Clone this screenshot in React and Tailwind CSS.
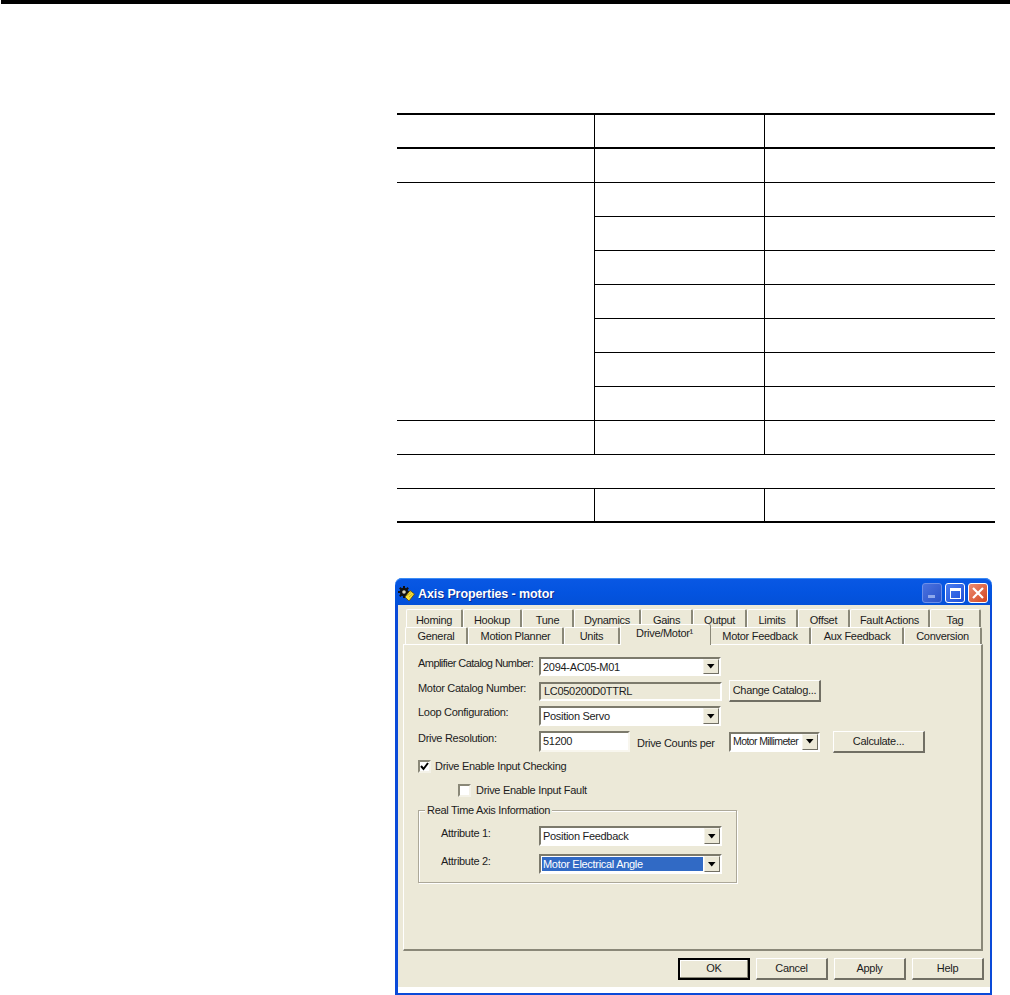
const F = "font-['Liberation_Sans',sans-serif] text-[11px] leading-none tracking-[-0.3px] whitespace-nowrap text-[#1c1c1c]";

function TableRow({ border = "border-b", cols = true }) {
  return (
    <div className={`flex h-[34px] ${border} border-black`}>
      <div className="w-[197px] shrink-0" />
      {cols && <div className="w-[170px] shrink-0 border-l border-black" />}
      {cols && <div className="flex-1 border-l border-black" />}
    </div>
  );
}

function SubRows() {
  return (
    <div className="flex">
      <div className="w-[197px] shrink-0 border-b border-black" />
      <div className="flex-1 flex flex-col">
        {[0, 1, 2, 3, 4, 5, 6].map((i) => (
          <div key={i} className="flex h-[34px] border-b border-black">
            <div className="w-[170px] shrink-0 border-l border-black" />
            <div className="flex-1 border-l border-black" />
          </div>
        ))}
      </div>
    </div>
  );
}

function Tab({ w, children, active = false, upper = false }) {
  return (
    <div
      style={{ width: w }}
      className={`shrink-0 flex items-center justify-center rounded-t-[2px] border-t border-l border-white border-r-2 border-r-[#8a8878] bg-[#ece9d8] ${F} ${
        active
          ? "h-[21px] -mt-[3px] z-10 -mb-px pb-[3px] border-r-[#ece9d8] shadow-[1px_0_0_#8a8878]"
          : upper
          ? "h-full pt-[3px]"
          : "h-full pt-[1px]"
      }`}
    >
      {children}
    </div>
  );
}

function Arrow() {
  return (
    <div className="w-[16px] h-full shrink-0 flex items-center justify-center bg-[#ece9d8] border border-t-[#f5f3ea] border-l-[#f5f3ea] border-r-[#716f64] border-b-[#716f64]">
      <svg width="8" height="5" viewBox="0 0 8 5"><path d="M0 0h7.5L3.75 4.5z" fill="#000" /></svg>
    </div>
  );
}

function Select({ children, w = "w-[182px]", h = "h-[20px]", selected = false, inner = "" }) {
  return (
    <div className={`${w} ${h} shrink-0 flex bg-white border-2 border-t-[#7c7a6c] border-l-[#7c7a6c] border-r-[#ffffff] border-b-[#ffffff] pr-0`}>
      <div className={`flex-1 min-w-0 overflow-hidden flex items-center pl-px m-px ${F} ${selected ? "bg-[#316ac5] !text-white" : ""} ${inner}`}>
        {children}
      </div>
      <Arrow />
    </div>
  );
}

function Btn({ w, h = "h-[22px]", children, def = false, inner = "pb-px" }) {
  return (
    <div
      style={{ width: w }}
      className={`${h} shrink-0 flex items-center justify-center bg-[#ece9d8] ${inner} ${F} ${
        def
          ? "border-2 border-black shadow-[inset_-1px_-1px_0_#8a8878,inset_1px_1px_0_#fff]"
          : "border border-t-white border-l-white border-r-[#716f64] border-b-[#716f64] border-b-2 border-r-2"
      }`}
    >
      {children}
    </div>
  );
}

function Check({ checked = false }) {
  return (
    <div className="w-[13px] h-[13px] shrink-0 flex items-center justify-center bg-white border-2 border-t-[#8a8878] border-l-[#8a8878] border-r-[#f4f2e8] border-b-[#f4f2e8]">
      {checked && (
        <svg width="9" height="9" viewBox="0 0 9 9"><path d="M1 4l2.5 3L8 1" fill="none" stroke="#000" strokeWidth="2" /></svg>
      )}
    </div>
  );
}

function Logo() {
  return (
    <svg width="17" height="16" viewBox="0 0 17 16" className="shrink-0">
      <path d="M6 0v12M0 6h12M1.8 1.8l8.4 8.4M10.2 1.8l-8.4 8.4" stroke="#111" strokeWidth="2" />
      <circle cx="6" cy="6" r="4.2" fill="#111" />
      <circle cx="6" cy="6" r="1.8" fill="#d8d4c0" />
      <path d="M7 11l5-6.5 4.5 3.5-5.5 7z" fill="#f7e13a" stroke="#5a4a08" strokeWidth=".8" />
      <path d="M9.5 9.5l3.5-3M11 11l3.5-3" stroke="#b89a10" strokeWidth=".7" />
    </svg>
  );
}

function CaptionBtn({ kind }) {
  if (kind === "close")
    return (
      <div className="w-[20px] h-[20px] rounded-[3px] border border-white bg-gradient-to-br from-[#ec8b70] to-[#d2431a] flex items-center justify-center">
        <svg width="12" height="12" viewBox="0 0 12 12"><path d="M1 1l10 10M11 1L1 11" stroke="#fff" strokeWidth="2.2" /></svg>
      </div>
    );
  if (kind === "max")
    return (
      <div className="w-[20px] h-[20px] rounded-[3px] border border-white bg-gradient-to-br from-[#4a7cf0] to-[#1f4fd8] flex items-center justify-center">
        <div className="w-[11px] h-[11px] border border-white border-t-[3px]" />
      </div>
    );
  return (
    <div className="w-[20px] h-[20px] rounded-[3px] border border-[#6d8fe8] bg-gradient-to-br from-[#4a72e0] to-[#2a52c8] flex items-end pl-[5px] pb-[4px]">
      <div className="w-[7px] h-[3px] bg-[#8fa8ec]" />
    </div>
  );
}

export default function App() {
  return (
    <div className="w-[1010px] h-[995px] bg-white overflow-hidden">
      <div className="h-[4px] ml-px bg-black" />

      <div className="ml-[397px] mt-[109px] w-[598px]">
        <div className="border-t-2 border-black">
          <TableRow border="border-b-2" />
          <TableRow />
          <SubRows />
          <TableRow />
          <TableRow cols={false} />
          <TableRow border="border-b-2" />
        </div>
      </div>

      <div className="ml-[395px] mt-[55px] w-[597px] h-[417px] flex flex-col">
        <div className="h-[27px] shrink-0 pt-[4px] rounded-t-[7px] bg-gradient-to-b from-[#0a58e4] via-[#0454e0] to-[#0350d8] shadow-[inset_0_1px_0_#3b8cf5] flex items-center pl-[3px] pr-[4px]">
          <Logo />
          <span className="ml-[3px] pt-px font-['Liberation_Sans',sans-serif] text-[12.5px] tracking-[-0.1px] font-bold text-white leading-none whitespace-nowrap [text-shadow:1px_1px_0_#0a2a90]">
            Axis Properties - motor
          </span>
          <div className="ml-auto flex gap-[3px] -mt-[1px]">
            <CaptionBtn kind="min" />
            <CaptionBtn kind="max" />
            <CaptionBtn kind="close" />
          </div>
        </div>

        <div className="flex-1 flex flex-col border-l-[3px] border-r-[2px] border-b-[2px] border-[#0a4ad8] bg-white">
          <div className="flex-1 flex flex-col bg-[#ece9d8]">
            <div className="h-[4px] shrink-0" />
            <div className="flex h-[18px] pl-[8px]">
              {[["Homing", 57], ["Hookup", 59], ["Tune", 52], ["Dynamics", 67], ["Gains", 52], ["Output", 54], ["Limits", 51], ["Offset", 52], ["Fault Actions", 80], ["Tag", 51]].map(([t, w]) => (
                <Tab key={t} w={w} upper>{t}</Tab>
              ))}
            </div>
            <div className="flex h-[17px] pl-[7px] relative">
              {[["General", 63], ["Motion Planner", 96], ["Units", 56]].map(([t, w]) => (
                <Tab key={t} w={w}>{t}</Tab>
              ))}
              <Tab w={90} active>Drive/Motor¹</Tab>
              {[["Motor Feedback", 101], ["Aux Feedback", 93], ["Conversion", 78]].map(([t, w]) => (
                <Tab key={t} w={w}>{t}</Tab>
              ))}
            </div>

            <div className="mx-[5px] mr-[7px] h-[307px] shrink-0 border border-t-white border-l-white border-r-2 border-b-2 border-r-[#8a8878] border-b-[#8a8878] pl-[14px] flex flex-col">
              <div className="mt-[12px] flex items-center h-[19px]">
                <span className={`w-[121px] shrink-0 pb-[6px] ${F} !tracking-[-0.55px]`}>Amplifier Catalog Number:</span>
                <Select h="h-[19px]" w="w-[182px]" inner="pt-[2px]">2094-AC05-M01</Select>
              </div>
              <div className="mt-[4px] flex items-center h-[22px]">
                <span className={`w-[121px] shrink-0 pb-[5px] ${F}`}>Motor Catalog Number:</span>
                <div className={`w-[183px] h-[19px] shrink-0 flex items-center pl-[3px] bg-[#ece9d8] border-2 border-t-[#7c7a6c] border-l-[#7c7a6c] border-r-white border-b-white ${F}`}>LC050200D0TTRL</div>
                <div className="ml-[7px]"><Btn w={92}>Change Catalog...</Btn></div>
              </div>
              <div className="mt-[4px] flex items-center h-[20px]">
                <span className={`w-[121px] shrink-0 pb-[8px] ${F}`}>Loop Configuration:</span>
                <Select>Position Servo</Select>
              </div>
              <div className="mt-[5px] flex items-center h-[21px]">
                <span className={`w-[121px] shrink-0 pb-[6px] ${F}`}>Drive Resolution:</span>
                <div className={`w-[91px] h-[21px] shrink-0 flex items-center pl-[2px] bg-white border-2 border-t-[#7c7a6c] border-l-[#7c7a6c] border-r-[#f8f6ee] border-b-[#f8f6ee] ${F}`}>51200</div>
                <span className={`ml-[7px] w-[92px] shrink-0 pt-[3px] ${F}`}>Drive Counts per</span>
                <Select w="w-[91px]" h="h-[20px]" inner="!text-[10.5px] !tracking-[-0.6px]">Motor Millimeter</Select>
                <div className="ml-[13px]"><Btn w={92} inner="pt-px">Calculate...</Btn></div>
              </div>
              <div className="mt-[8px] flex items-center h-[13px] gap-[4px]">
                <Check checked />
                <span className={F}>Drive Enable Input Checking</span>
              </div>
              <div className="mt-[11px] ml-[40px] flex items-center h-[13px] gap-[5px]">
                <Check />
                <span className={F}>Drive Enable Input Fault</span>
              </div>
              <div className="relative mt-[13px] w-[319px] h-[73px] shrink-0 border border-[#aca899] shadow-[inset_1px_1px_0_#fff,1px_1px_0_#fff] pl-[22px] flex flex-col">
                <span className={`absolute -top-[6px] left-[6px] px-[2px] bg-[#ece9d8] ${F}`}>Real Time Axis Information</span>
                <div className="mt-[15px] flex items-center h-[20px]">
                  <span className={`w-[98px] shrink-0 pb-[6px] ${F}`}>Attribute 1:</span>
                  <Select w="w-[183px]">Position Feedback</Select>
                </div>
                <div className="mt-[8px] flex items-center h-[20px]">
                  <span className={`w-[98px] shrink-0 pb-[6px] ${F}`}>Attribute 2:</span>
                  <Select w="w-[183px]" selected>Motor Electrical Angle</Select>
                </div>
              </div>
            </div>

            <div className="mt-[7px] flex justify-end gap-[6px] pr-[6px]">
              <Btn w={72} def>OK</Btn>
              <Btn w={72}>Cancel</Btn>
              <Btn w={72}>Apply</Btn>
              <Btn w={72}>Help</Btn>
            </div>
          </div>
          <div className="h-[6px] shrink-0 bg-white" />
        </div>
      </div>
    </div>
  );
}
